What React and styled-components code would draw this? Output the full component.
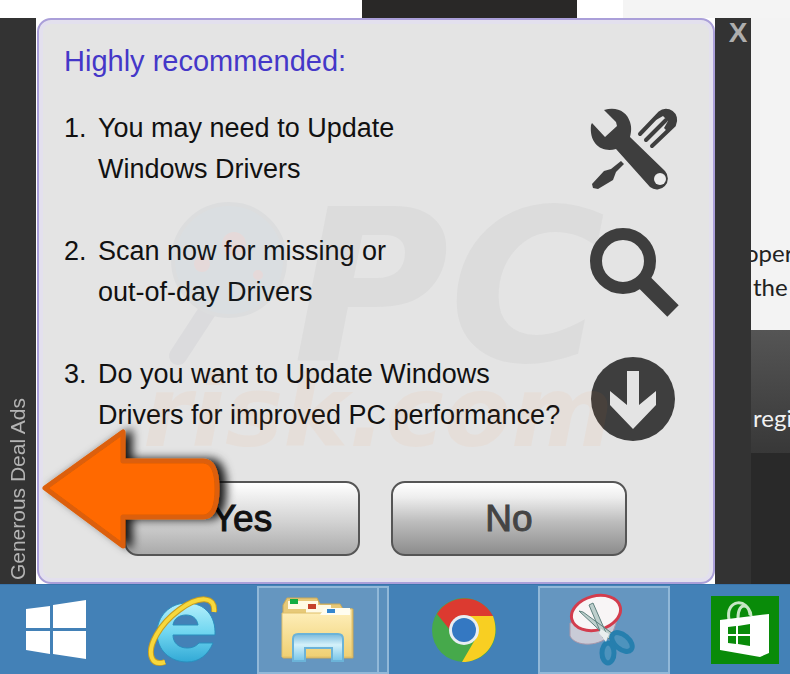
import React from "react";
import styled, { createGlobalStyle } from "styled-components";

const GlobalStyle = createGlobalStyle`
  * {
    box-sizing: border-box;
  }
  body {
    margin: 0;
    background: #fff;
    font-family: "Liberation Sans", Arial, sans-serif;
  }
  button {
    font-family: inherit;
    padding: 0;
    cursor: pointer;
  }
`;

const Screen = styled.div`
  min-height: 100vh;
  display: flex;
  flex-direction: column;
  overflow: hidden;
`;

const TopStrip = styled.div`
  height: 18px;
  display: grid;
  grid-template-columns: 362fr 215fr 46fr 167fr;
`;

const StripCell = styled.div`
  background: ${(props) => props.$color};
`;

const Middle = styled.div`
  flex: 1;
  display: flex;
`;

const Rail = styled.aside`
  width: 36px;
  flex-shrink: 0;
  display: flex;
  flex-direction: column;
  align-items: center;
  justify-content: ${(props) => (props.$bottom ? "flex-end" : "flex-start")};
  background: #333;
`;

const AdLabel = styled.span`
  writing-mode: vertical-rl;
  transform: rotate(180deg);
  padding-top: 4px;
  font-size: 21px;
  line-height: 24px;
  color: #b4b4b4;
  white-space: nowrap;
`;

const CloseButton = styled.button`
  align-self: flex-end;
  width: 26px;
  height: 30px;
  border: 0;
  background: none;
  color: #aeaeae;
  font-size: 28px;
  font-weight: bold;
  line-height: 30px;
`;

const Panel = styled.main`
  position: relative;
  flex: 1;
  margin-left: 1px;
  padding: 21px 35px 24px 25px;
  border: 2px solid #aa9fd9;
  border-radius: 14px;
  background: #e4e4e4;
  box-shadow: inset 0 0 0 4px #e3e0ee;
`;

const Title = styled.h1`
  margin: 0 0 26px;
  font-size: 29px;
  font-weight: normal;
  line-height: 41px;
  color: #4437c8;
`;

const Steps = styled.ol`
  display: flex;
  flex-direction: column;
  gap: 41px;
  margin: 0;
  padding: 0;
  list-style: none;
`;

const Step = styled.li`
  display: flex;
  font-size: 27px;
  line-height: 41px;
  color: #111;
`;

const StepNumber = styled.span`
  width: 34px;
  flex-shrink: 0;
`;

const StepText = styled.p`
  flex: 1;
  margin: 0;
  white-space: nowrap;
`;

const StepIcon = styled.svg`
  width: 90px;
  height: 82px;
  overflow: visible;
  flex-shrink: 0;
`;

const Actions = styled.div`
  display: flex;
  gap: 31px;
  margin-top: 45px;
  padding: 0 51px 0 60px;
`;

const ActionButton = styled.button`
  flex: 1;
  height: 75px;
  border: 2px solid #555;
  border-radius: 14px;
  background: linear-gradient(
    #fff 0%,
    #eee 20%,
    ${(props) => (props.$dark ? "#bcbcbc 55%, #8c8c8c 100%" : "#d2d2d2 55%, #aaa 100%")}
  );
  color: ${(props) => (props.$dark ? "#444" : "#111")};
  font-size: 37px;
  -webkit-text-stroke: 1px currentColor;
`;

const Watermark = styled.div`
  position: absolute;
  inset: 0;
  pointer-events: none;
  opacity: 0.05;
`;

const WatermarkSvg = styled.svg`
  width: 100%;
  height: 100%;
  font-family: "DejaVu Sans", sans-serif;
  font-style: italic;
  font-weight: bold;
`;

const Arrow = styled.svg`
  position: absolute;
  left: 0;
  top: 400px;
  width: 200px;
  height: 140px;
  overflow: visible;
  pointer-events: none;
`;

const SidePage = styled.section`
  width: 39px;
  flex-shrink: 0;
  display: flex;
  flex-direction: column;
  overflow: hidden;
  font-family: Lato, "Open Sans", sans-serif;
  font-size: 24px;
  line-height: 34px;
  white-space: nowrap;
`;

const SideText = styled.p`
  height: 312px;
  margin: 0;
  padding: 218px 0 0 2px;
  /* first line runs under the rail */
  text-indent: -8px;
  background: #f3f3f3;
  color: #222;
`;

const SideBand = styled.div`
  height: 123px;
  padding: 71px 0 0 2px;
  background: linear-gradient(#555, #383838);
  color: #f2f2f2;
`;

const SideFooter = styled.div`
  flex: 1;
  background: #292929;
`;

const Taskbar = styled.nav`
  height: 90px;
  display: flex;
  align-items: center;
  border-top: 1px solid #3974ab;
  background: #4381b7;
`;

const TaskButton = styled.button`
  width: ${(props) => props.$width}px;
  height: 88px;
  flex-shrink: 0;
  display: flex;
  align-items: center;
  justify-content: center;
  border: ${(props) => (props.$open ? "2px solid #91b8d8" : "0")};
  background: ${(props) => (props.$open ? "#6596c0" : "none")};
  margin-left: ${(props) => props.$gap || 0}px;
`;

const StackEdge = styled.div`
  width: 10px;
  height: 88px;
  flex-shrink: 0;
  border: solid #91b8d8;
  border-width: 2px 2px 2px 0;
  background: #5b90bd;
`;

function ToolsIcon() {
  return (
    <StepIcon viewBox="0 0 90 82" aria-hidden="true">
      <path
        d="M16 2C29-2 39 4 42 14c2 6 1 11 0 15l35 34a11 11 0 0 1-15 16L28 41C14 45 1 36 3 17l1-2 13 14 12-11-1-4z"
        fill="#3e3e3e"
      />
      <circle cx="72" cy="71" r="6" fill="#ececec" />
      <path
        d="M52 26 72 5C79-1 91 6 86 17L64 38"
        fill="none"
        stroke="#3e3e3e"
        strokeWidth="4"
        strokeLinecap="round"
      />
      <path d="M71 6C79-1 91 6 86 17l-7 6-3-3 4-7-5-5-7 4z" fill="#3e3e3e" />
      <path d="m58 32 20-20" fill="none" stroke="#3e3e3e" strokeWidth="4" strokeLinecap="round" />
      <path d="m33 53 3 3-8 8-3 8-15 9-5-1-1-4 12-13 7-2z" fill="#3e3e3e" />
    </StepIcon>
  );
}

function SearchIcon() {
  return (
    <StepIcon viewBox="0 0 90 82" aria-hidden="true">
      <circle cx="35" cy="30" r="27" fill="none" stroke="#3e3e3e" strokeWidth="12" />
      <path d="m53 48 32 32" stroke="#3e3e3e" strokeWidth="16" />
    </StepIcon>
  );
}

function DownIcon() {
  return (
    <StepIcon viewBox="0 0 90 82" aria-hidden="true">
      <circle cx="45" cy="45" r="42" fill="#3e3e3e" />
      <path d="M39 17h12v34l17-14v14L45 75 22 51V37l17 14z" fill="#e4e4e4" />
    </StepIcon>
  );
}

function WindowsIcon() {
  return (
    <svg width="62" height="60" viewBox="0 0 62 60" aria-hidden="true">
      <path d="M1 9 25 6v22H1zM28 5 61 0v28H28zM1 31h24v23L1 50zM28 31h33v28l-33-5z" fill="#fff" />
    </svg>
  );
}

function ExplorerEIcon() {
  return (
    <svg width="70" height="72" viewBox="0 0 70 72" aria-hidden="true">
      <defs>
        <linearGradient id="ie" x1="0" y1="0" x2="0" y2="1">
          <stop offset="0" stopColor="#b3effb" />
          <stop offset="0.5" stopColor="#70d6f0" />
          <stop offset="1" stopColor="#32a9d6" />
        </linearGradient>
      </defs>
      <path
        d="M67 41H25c0 8 6 13 14 13 6 0 9-2 12-5h14C60 61 51 68 39 68 22 68 9 56 9 39S22 9 39 9c18 0 29 13 28 32zM25 31h25c-1-7-6-10-12-10s-12 3-13 10z"
        fill="url(#ie)"
        stroke="#298fbe"
      />
      <path
        d="M66 18C68 2 51 1 31 16 12 30-1 52 4 64c2 5 7 6 13 4"
        fill="none"
        stroke="#c59e22"
        strokeWidth="6"
      />
      <path
        d="M66 18C68 2 51 1 31 16 12 30-1 52 4 64c2 5 7 6 13 4"
        fill="none"
        stroke="#f8d83b"
        strokeWidth="4"
      />
    </svg>
  );
}

function FolderIcon() {
  return (
    <svg width="74" height="68" viewBox="0 0 74 68" aria-hidden="true">
      <defs>
        <linearGradient id="folder" x1="0" y1="0" x2="0" y2="1">
          <stop offset="0" stopColor="#fff0bd" />
          <stop offset="1" stopColor="#efd073" />
        </linearGradient>
        <linearGradient id="stand" x1="0" y1="0" x2="0" y2="1">
          <stop offset="0" stopColor="#79b9dc" />
          <stop offset="0.4" stopColor="#d4f1fa" />
          <stop offset="1" stopColor="#76c5e9" />
        </linearGradient>
      </defs>
      <path d="M2 9 6 2h30l3 6h20l3 5h10v49H2z" fill="#e7c978" stroke="#c9a859" />
      <path d="M7 5h30v8H7zM25 9h25v8H25z" fill="#fffae4" />
      <path d="M9 3h8v5H9z" fill="#12ad42" />
      <path d="M27 8h8v5h-8z" fill="#c5422b" />
      <path d="M1 17h39l5-4h26v48H1z" fill="url(#folder)" stroke="#dfc06b" />
      <path d="M43 12h26v7H39z" fill="#fffdf0" />
      <path d="M46 13h8v4h-8z" fill="#3587ce" />
      <path
        d="M12 43q0-5 5-5h40q5 0 5 5v22H51V52H24v13H12z"
        fill="url(#stand)"
        stroke="#6bb3d8"
        strokeWidth="2"
      />
    </svg>
  );
}

function ChromeIcon() {
  return (
    <svg width="66" height="66" viewBox="0 0 66 66" aria-hidden="true">
      <circle cx="33" cy="33" r="32" fill="#46a94b" />
      <path d="M33 33h-14L6 17C18-3 49-5 62 19H33z" fill="#dc3a30" />
      <path d="M33 19h29c9 25-8 46-31 46l14-24z" fill="#f8cf22" />
      <circle cx="33" cy="33" r="15" fill="#e8eef2" />
      <circle cx="33" cy="33" r="12" fill="#3478c2" />
    </svg>
  );
}

function SnipIcon() {
  return (
    <svg width="72" height="74" viewBox="0 0 72 74" aria-hidden="true">
      <path d="M2 30v13c5 11 31 12 43-4l6-18z" fill="#c9cbd7" stroke="#aa98ab" />
      <ellipse
        cx="28"
        cy="20"
        rx="25"
        ry="17"
        transform="rotate(-15 28 20)"
        fill="#f8f5f6"
        stroke="#d33c4d"
        strokeWidth="3"
      />
      <path d="m21 12 4-2 14 32-4 3zM11 18l4 1 30 22-4 5z" fill="#becfcd" stroke="#60827f" />
      <g fill="#4d93bd" stroke="#267fae" strokeWidth="5">
        <ellipse cx="54" cy="49" rx="12" ry="7" transform="rotate(40 54 49)" />
        <ellipse cx="40" cy="60" rx="6" ry="10" />
      </g>
      <path d="m33 36 8 5-3 8-7-9z" fill="#e9eeee" />
    </svg>
  );
}

function StoreIcon() {
  return (
    <svg width="68" height="68" viewBox="0 0 68 68" aria-hidden="true">
      <path d="M0 0h68v68H0z" fill="#098b09" />
      <path
        d="M18 24C14 2 38 2 39 19M27 22c0-17 12-14 13-2"
        fill="none"
        stroke="#c7e6c4"
        strokeWidth="3"
      />
      <path d="m9 24 49-6v39l-9 4-40-7z" fill="#fff" />
      <path
        d="m17 31 8-1v8h-8zM27 30l12-2v10H27zM17 40h8v8l-8-1zM27 40h12v10l-12-2z"
        fill="#098b09"
      />
    </svg>
  );
}

const steps = [
  { lines: ["You may need to Update", "Windows Drivers"], Icon: ToolsIcon },
  { lines: ["Scan now for missing or", "out-of-day Drivers"], Icon: SearchIcon },
  {
    lines: ["Do you want to Update Windows", "Drivers for improved PC performance?"],
    Icon: DownIcon,
  },
];

export default function App() {
  return (
    <Screen>
      <GlobalStyle />
      <TopStrip>
        <StripCell $color="#fff" />
        <StripCell $color="#292827" />
        <StripCell $color="#fff" />
        <StripCell $color="#f4f4f4" />
      </TopStrip>

      <Middle>
        <Rail $bottom>
          <AdLabel>Generous Deal Ads</AdLabel>
        </Rail>

        <Panel>
          <Title>Highly recommended:</Title>
          <Steps>
            {steps.map(({ lines, Icon }, index) => (
              <Step key={lines[0]}>
                <StepNumber>{index + 1}.</StepNumber>
                <StepText>
                  {lines[0]}
                  <br />
                  {lines[1]}
                </StepText>
                <Icon />
              </Step>
            ))}
          </Steps>
          <Actions>
            <ActionButton type="button">Yes</ActionButton>
            <ActionButton type="button" $dark>
              No
            </ActionButton>
          </Actions>

          <Watermark aria-hidden="true">
            <WatermarkSvg>
              <path d="m169 290-30 46" stroke="#446" strokeWidth="18" strokeLinecap="round" />
              <circle cx="190" cy="240" r="56" fill="#3a86b8" stroke="#567" strokeWidth="4" />
              <circle cx="195" cy="224" r="12" fill="#f22" />
              <circle cx="163" cy="244" r="8" fill="#f22" />
              <circle cx="219" cy="255" r="5" fill="#f22" />
              <text x="254" y="341" fontSize="213" fill="#555">
                PC
              </text>
              <text x="104" y="426" fontSize="98" fill="#ff7a20">
                risk.com
              </text>
            </WatermarkSvg>
          </Watermark>

          {/* pointer to the ad label */}
          <Arrow viewBox="0 0 200 140" aria-hidden="true">
            <defs>
              <filter id="shadow" x="-20%" y="-20%" width="150%" height="150%">
                <feDropShadow dx="7" dy="0" stdDeviation="5" floodColor="#000" floodOpacity="0.9" />
              </filter>
            </defs>
            <path
              d="M6 68 84 12v29h80q14 0 14 28t-14 28H84v29z"
              fill="#ff6900"
              stroke="#dc5f08"
              strokeWidth="5"
              strokeLinejoin="round"
              filter="url(#shadow)"
            />
          </Arrow>
        </Panel>

        <Rail>
          <CloseButton type="button" aria-label="Close">
            X
          </CloseButton>
        </Rail>

        <SidePage>
          <SideText>
            oper
            <br />
            the
          </SideText>
          <SideBand>regi</SideBand>
          <SideFooter />
        </SidePage>
      </Middle>

      <Taskbar aria-label="Taskbar">
        <TaskButton $width={112} aria-label="Start">
          <WindowsIcon />
        </TaskButton>
        <TaskButton $width={141} aria-label="Internet Explorer">
          <ExplorerEIcon />
        </TaskButton>
        <TaskButton $width={122} $gap={4} $open aria-label="File Explorer">
          <FolderIcon />
        </TaskButton>
        <StackEdge />
        <TaskButton $width={149} aria-label="Chrome">
          <ChromeIcon />
        </TaskButton>
        <TaskButton $width={132} $open aria-label="Snipping Tool">
          <SnipIcon />
        </TaskButton>
        <TaskButton $width={68} $gap={41} aria-label="Store">
          <StoreIcon />
        </TaskButton>
      </Taskbar>
    </Screen>
  );
}
